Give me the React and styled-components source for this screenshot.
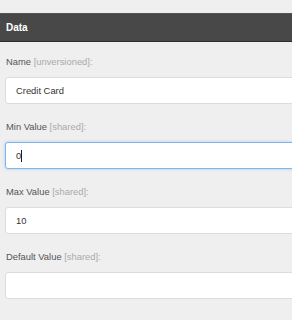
import React from "react";
import styled, { createGlobalStyle } from "styled-components";

const Global = createGlobalStyle`
  html, body { margin: 0; padding: 0; background: #efefef; }
  body { font-family: "Liberation Sans", Arial, sans-serif; overflow: hidden; }
`;

const Page = styled.div`
  width: 292px;
  height: 320px;
  padding-top: 14px;
  box-sizing: border-box;
  overflow: hidden;
  background: #efefef;
`;

const Header = styled.div`
  height: 27px;
  background: #484848;
  border-top: 1px solid #555;
  border-bottom: 1px solid #2e2e2e;
  box-sizing: content-box;
  display: flex;
  align-items: center;
  padding-left: 6px;
  color: #fff;
  font-weight: bold;
  font-size: 10px;
  margin-top: -1px;
`;

const Form = styled.div`
  display: flex;
  flex-direction: column;
  gap: 17px;
  padding: 14px 0 0 5px;
`;

const Field = styled.div`
  display: flex;
  flex-direction: column;
  gap: 9px;
`;

const Label = styled.div`
  font-size: 9.4px;
  line-height: 12px;
  color: #555;
  padding-left: 1px;
`;

const Hint = styled.span`
  color: #aaa;
`;

const Box = styled.div`
  width: 320px;
  height: 27px;
  box-sizing: border-box;
  background: #fff;
  border: 1px solid ${(p) => (p.$focused ? "#82b5ea" : "#dcdcdc")};
  border-radius: 3px;
  box-shadow: ${(p) =>
    p.$focused ? "0 0 3px rgba(102, 165, 233, 0.55)" : "none"};
  display: flex;
  align-items: center;
  padding-left: 10px;
  font-size: 9.4px;
  color: #333;
`;

const Caret = styled.span`
  display: inline-block;
  width: 1px;
  height: 12px;
  background: #1a1a3a;
`;

const fields = [
  { name: "Name", hint: "[unversioned]:", value: "Credit Card" },
  { name: "Min Value", hint: "[shared]:", value: "0", focused: true },
  { name: "Max Value", hint: "[shared]:", value: "10" },
  { name: "Default Value", hint: "[shared]:", value: "" },
];

export default function App() {
  return (
    <Page>
      <Global />
      <Header>Data</Header>
      <Form>
        {fields.map((f) => (
          <Field key={f.name}>
            <Label>
              {f.name} <Hint>{f.hint}</Hint>
            </Label>
            <Box $focused={f.focused}>
              {f.value}
              {f.focused && <Caret />}
            </Box>
          </Field>
        ))}
      </Form>
    </Page>
  );
}
